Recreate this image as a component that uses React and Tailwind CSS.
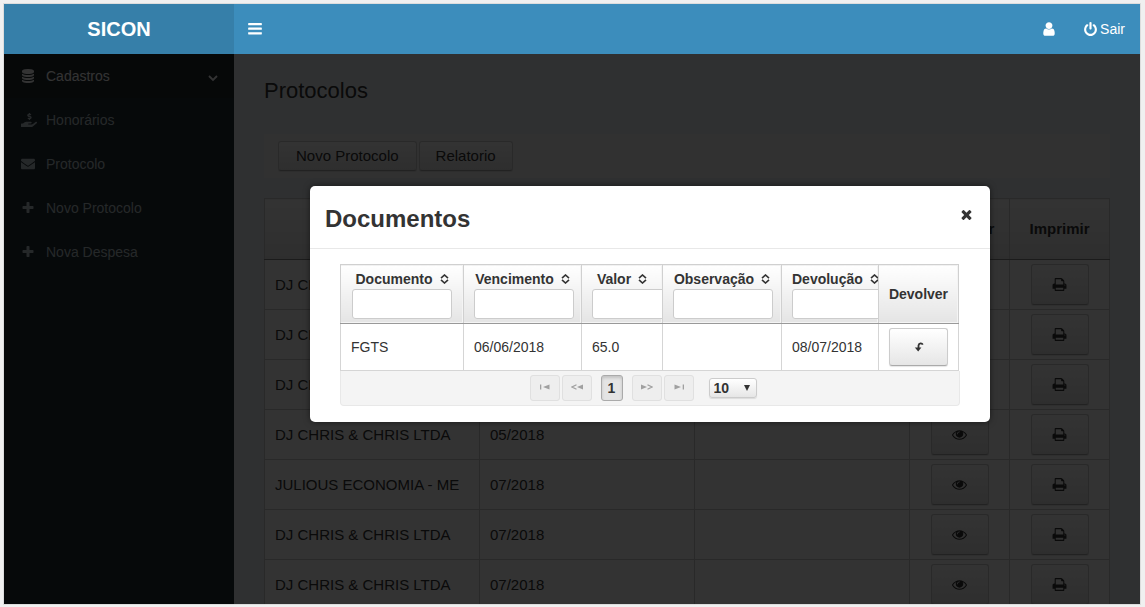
import React from "react";
import { FaHandHoldingUsd, FaEnvelope } from "react-icons/fa";

const PATHS = {
  bars: "M1664 1312v128q0 26-19 45t-45 19h-1408q-26 0-45-19t-19-45v-128q0-26 19-45t45-19h1408q26 0 45 19t19 45zm0-512v128q0 26-19 45t-45 19h-1408q-26 0-45-19t-19-45v-128q0-26 19-45t45-19h1408q26 0 45 19t19 45zm0-512v128q0 26-19 45t-45 19h-1408q-26 0-45-19t-19-45v-128q0-26 19-45t45-19h1408q26 0 45 19t19 45z",
  user: "M1536 1399q0 109-62.5 187t-150.5 78h-854q-88 0-150.5-78t-62.5-187q0-85 8.5-160.5t31.5-152 58.5-131 94-89 134.5-34.5q131 128 313 128t313-128q76 0 134.5 34.5t94 89 58.5 131 31.5 152 8.5 160.5zm-256-887q0 159-112.5 271.5t-271.5 112.5-271.5-112.5-112.5-271.5 112.5-271.5 271.5-112.5 271.5 112.5 112.5 271.5z",
  power: "M1664 896q0 156-61 298t-164 245-245 164-298 61-298-61-245-164-164-245-61-298q0-182 80.5-343t226.5-270q43-32 95.5-25t83.5 50q32 42 24.5 94.5t-49.5 84.5q-98 74-151.5 181t-53.5 228q0 104 40.5 198.5t109.5 163.5 163.5 109.5 198.5 40.5 198.5-40.5 163.5-109.5 109.5-163.5 40.5-198.5q0-121-53.5-228t-151.5-181q-42-32-49.5-84.5t24.5-94.5q31-43 84-50t95 25q146 109 226.5 270t80.5 343zm-640-768v640q0 52-38 90t-90 38-90-38-38-90v-640q0-52 38-90t90-38 90 38 38 90z",
  database: "M896 768q237 0 443-43t325-127v170q0 69-103 128t-280 93.5-385 34.5-385-34.5-280-93.5-103-128v-170q119 84 325 127t443 43zm0 768q237 0 443-43t325-127v170q0 69-103 128t-280 93.5-385 34.5-385-34.5-280-93.5-103-128v-170q119 84 325 127t443 43zm0-384q237 0 443-43t325-127v170q0 69-103 128t-280 93.5-385 34.5-385-34.5-280-93.5-103-128v-170q119 84 325 127t443 43zm0-1152q208 0 385 34.5t280 93.5 103 128v128q0 69-103 128t-280 93.5-385 34.5-385-34.5-280-93.5-103-128v-128q0-69 103-128t280-93.5 385-34.5z",
  plus: "M1600 736v192q0 40-28 68t-68 28h-416v416q0 40-28 68t-68 28h-192q-40 0-68-28t-28-68v-416h-416q-40 0-68-28t-28-68v-192q0-40 28-68t68-28h416v-416q0-40 28-68t68-28h192q40 0 68 28t28 68v416h416q40 0 68 28t28 68z",
  print: "M448 1536h896v-256h-896v256zm0-640h896v-384h-160q-40 0-68-28t-28-68v-160h-640v640zm1152 64q0-26-19-45t-45-19-45 19-19 45 19 45 45 19 45-19 19-45zm128 0v416q0 13-9.5 22.5t-22.5 9.5h-224v160q0 40-28 68t-68 28h-960q-40 0-68-28t-28-68v-160h-224q-13 0-22.5-9.5t-9.5-22.5v-416q0-79 56.5-135.5t135.5-56.5h64v-544q0-40 28-68t68-28h672q40 0 88 20t76 48l152 152q28 28 48 76t20 88v256h64q79 0 135.5 56.5t56.5 135.5z",
  eye: "M1664 960q-152-236-381-353 61 104 61 225 0 185-131.5 316.5t-316.5 131.5-316.5-131.5-131.5-316.5q0-121 61-225-229 117-381 353 133 205 333.5 326.5t434.5 121.5 434.5-121.5 333.5-326.5zm-720-384q0-20-14-34t-34-14q-125 0-214.5 89.5t-89.5 214.5q0 20 14 34t34 14 34-14 14-34q0-86 61-147t147-61q20 0 34-14t14-34zm848 384q0 34-20 69-140 230-376.5 368.5t-499.5 138.5-499.5-139-376.5-368q-20-35-20-69t20-69q140-229 376.5-368t499.5-139 499.5 139 376.5 368q20 35 20 69z",
  times: "M1490 1322q0 40-28 68l-136 136q-28 28-68 28t-68-28l-294-294-294 294q-28 28-68 28t-68-28l-136-136q-28-28-28-68t28-68l294-294-294-294q-28-28-28-68t28-68l136-136q28-28 68-28t68 28l294 294 294-294q28-28 68-28t68 28l136 136q28 28 28 68t-28 68l-294 294 294 294q28 28 28 68z",
};

function Icon({ name, className = "size-3.5" }) {
  return (
    <svg viewBox="0 0 1792 1792" fill="currentColor" className={`shrink-0 ${className}`} aria-hidden="true">
      <path d={PATHS[name]} />
    </svg>
  );
}

const MENU = [
  { label: "Honorários", icon: <FaHandHoldingUsd className="size-4" /> },
  { label: "Protocolo", icon: <FaEnvelope className="size-3.5" /> },
  { label: "Novo Protocolo", icon: <Icon name="plus" /> },
  { label: "Nova Despesa", icon: <Icon name="plus" /> },
];

const ROWS = [
  ["DJ CHRIS & CHRIS LTDA", ""],
  ["DJ CHRIS & CHRIS LTDA", ""],
  ["DJ CHRIS & CHRIS LTDA", ""],
  ["DJ CHRIS & CHRIS LTDA", "05/2018"],
  ["JULIOUS ECONOMIA - ME", "07/2018"],
  ["DJ CHRIS & CHRIS LTDA", "07/2018"],
  ["DJ CHRIS & CHRIS LTDA", "07/2018"],
];

const BUTTON =
  "flex items-center justify-center rounded-[3px] border border-[#ccc] border-b-[#aaa] bg-linear-to-b from-white to-[#e6e6e6] text-[#333] shadow-[0_1px_1px_rgba(0,0,0,0.1)]";

function Sidebar() {
  return (
    <nav className="w-[230px] shrink-0 bg-[#222d32] text-sm text-[#b8c7ce]">
      <a href="#cadastros" className="flex h-11 items-center bg-[#1e282c] pr-4 pl-[17px] text-white">
        <span className="flex w-[25px]"><Icon name="database" /></span>
        Cadastros
        <svg viewBox="0 0 10 10" className="mt-1 ml-auto size-2.5" fill="none" stroke="currentColor" strokeWidth="1.8" aria-hidden="true">
          <path d="M1 3l4 4 4-4" />
        </svg>
      </a>
      {MENU.map((m) => (
        <a key={m.label} href="#menu" className="flex h-11 items-center px-[17px]">
          <span className="flex w-[25px]">{m.icon}</span>
          {m.label}
        </a>
      ))}
    </nav>
  );
}

function Protocols() {
  const th = "border border-[#ccc] border-b-[#888] bg-linear-to-b from-white to-[#e6e6e6] px-2.5 font-bold";
  const td = "border border-[#ccc] px-2.5";
  return (
    <main className="min-w-0 flex-1 overflow-hidden bg-[#ecf0f5] px-[30px] pt-[21px] text-[15px] text-[#333]">
      <h1 className="text-[22px] leading-8">Protocolos</h1>
      <div className="mt-[27px] flex gap-0.5 bg-[#f4f4f5] px-3.5 py-[7px]">
        <button type="button" className={`${BUTTON} h-[30px] px-[17px]`}>Novo Protocolo</button>
        <button type="button" className={`${BUTTON} h-[30px] px-4`}>Relatorio</button>
      </div>
      <table className="mt-5 w-full table-fixed border-collapse bg-white">
        <colgroup>
          <col /><col /><col />
          <col className="w-[100px]" /><col className="w-[100px]" />
        </colgroup>
        <thead>
          <tr className="h-[61px]">
            <th className={th} />
            <th className={th} />
            <th className={th} />
            <th className={th}>Visualizar</th>
            <th className={th}>Imprimir</th>
          </tr>
        </thead>
        <tbody>
          {ROWS.map(([name, month], i) => (
            <tr key={i} className="h-[50px]">
              <td className={`${td} pt-0.5 whitespace-nowrap`}>{name}</td>
              <td className={`${td} pt-0.5`}>{month}</td>
              <td className={td} />
              <td className={td}>
                <button type="button" aria-label="Visualizar" className={`${BUTTON} mx-auto h-[41px] w-[58px]`}>
                  <Icon name="eye" className="size-[15px]" />
                </button>
              </td>
              <td className={td}>
                <button type="button" aria-label="Imprimir" className={`${BUTTON} mx-auto h-[41px] w-[58px]`}>
                  <Icon name="print" className="size-[15px]" />
                </button>
              </td>
            </tr>
          ))}
        </tbody>
      </table>
    </main>
  );
}

function SortIcon() {
  return (
    <svg viewBox="0 0 9 10" className="h-2.5 w-[9px] shrink-0" fill="none" stroke="currentColor" strokeWidth="1.6" aria-hidden="true">
      <path d="M1 4.200L4.500 1L8 4.200M1 5.800L4.500 9L8 5.800" />
    </svg>
  );
}

const COLUMNS = ["Documento", "Vencimento", "Valor", "Observação", "Devolução"];

function PageButton({ label, d, outline, className = "" }) {
  return (
    <button type="button" disabled aria-label={label} className={`flex h-[26px] w-[30px] items-center justify-center rounded-[3px] border border-[#e0e0e0] bg-[#eee] pb-0.5 text-[#a0a0a0] ${className}`}>
      <svg viewBox="0 0 12 6" className="h-1.5 w-3" aria-hidden="true">
        <path d={d} fill="currentColor" />
        {outline && <path d={outline} fill="none" stroke="currentColor" strokeWidth="1.2" />}
      </svg>
    </button>
  );
}

function Dialog() {
  const head = "border border-[#d0d0d0] border-b-[#999] bg-linear-to-b from-white to-[#e4e4e4] p-0 font-bold shadow-[inset_-1px_-1px_0_#f4f4f4]";
  const cell = "border border-[#d5d5d5] px-2.5";
  return (
    <section role="dialog" aria-labelledby="dialog-title" className="absolute top-[132px] left-[306px] w-[680px] rounded-[5px] bg-white pb-4 text-sm text-[#333] shadow-[0_0_6px_rgba(0,0,0,0.5)]">
      <header className="flex h-[63px] items-center justify-between border-b border-[#e8e8e8] px-[15px] pt-1">
        <h2 id="dialog-title" className="text-2xl font-bold">Documentos</h2>
        <button type="button" aria-label="Fechar" className="mb-2.5 flex size-[17px] items-center justify-center">
          <Icon name="times" className="size-[15px]" />
        </button>
      </header>
      <div className="px-[30px] pt-[15px]">
        <table className="w-[619px] table-fixed border-collapse">
          <colgroup>
            <col className="w-[123px]" /><col className="w-[118px]" /><col className="w-[81px]" />
            <col className="w-[119px]" /><col className="w-[97px]" /><col className="w-[80px]" />
          </colgroup>
          <thead>
            <tr className="h-[59px]">
              {COLUMNS.map((c) => (
                <th key={c} className={head}>
                  <div className="overflow-hidden px-2.5">
                    <div className="mx-auto flex h-5 w-max items-center gap-[7px]">
                      <span>{c}</span>
                      <SortIcon />
                    </div>
                    <input aria-label={`Filtrar ${c}`} className="mx-auto block h-[30px] w-[100px] rounded-[3px] border border-[#ccc] bg-white px-2 font-normal" />
                  </div>
                </th>
              ))}
              <th className={head}>Devolver</th>
            </tr>
          </thead>
          <tbody>
            <tr className="h-[47px]">
              <td className={cell}>FGTS</td>
              <td className={cell}>06/06/2018</td>
              <td className={cell}>65.0</td>
              <td className={cell} />
              <td className={cell}>08/07/2018</td>
              <td className={cell}>
                <button type="button" aria-label="Devolver" className={`${BUTTON} h-[38px] w-full`}>
                  <svg viewBox="0 0 10 10" className="size-2.5" fill="none" stroke="currentColor" strokeWidth="1.8" aria-hidden="true">
                    <path d="M8.800 2.600C8 1 5 .8 4.500 3.500V7" />
                    <path d="M.8 5.500h6.600L4.200 9.400z" fill="currentColor" stroke="none" />
                  </svg>
                </button>
              </td>
            </tr>
          </tbody>
        </table>
        <div className="flex h-[35px] items-center justify-center rounded-b border border-t-0 border-[#e8e8e8] bg-[#f4f4f4] pr-3.5">
          <PageButton label="Primeira página" d="M1 .5h1.300v5H1zM10.500 .5v5L4 3z" />
          <PageButton label="Página anterior" d="M12 .5v5L6 3z" outline="M5.500 .8L1 3l4.500 2.200" className="ml-0.5" />
          <button type="button" className="mx-[9px] h-[26px] w-[22px] rounded-[3px] border border-[#aaa] bg-[#e4e4e4] font-bold shadow-[inset_0_2px_3px_rgba(0,0,0,0.15)]">1</button>
          <PageButton label="Próxima página" d="M0 .5v5L6 3z" outline="M6.500 .8L11 3 6.500 5.200" />
          <PageButton label="Última página" d="M1.500 .5v5L8 3zM9.700 .5H11v5H9.700z" className="ml-0.5" />
          <div className="relative ml-[15px] h-5 w-12">
            <select aria-label="Linhas por página" defaultValue="10" className="block h-5 w-12 appearance-none rounded-[3px] border border-[#ccc] bg-linear-to-b from-white to-[#e6e6e6] pl-1 text-sm leading-[18px] font-bold shadow-[0_1px_1px_rgba(0,0,0,0.1)]">
              <option>10</option>
              <option>20</option>
            </select>
            <svg viewBox="0 0 6 6" className="pointer-events-none absolute top-[7px] right-[7px] size-1.5" fill="currentColor" aria-hidden="true">
              <path d="M0 0h6L3 6z" />
            </svg>
          </div>
        </div>
      </div>
    </section>
  );
}

export default function App() {
  return (
    <div className="h-screen bg-[#f0f0f0] pt-1 pr-[5px] pb-[3px] pl-1 font-['Liberation_Sans',Arial,sans-serif]">
      <div className="flex h-full flex-col overflow-hidden shadow-[0_0_0_1px_#ddd]">
        <header className="flex h-[50px] shrink-0 text-sm text-white">
          <a href="#inicio" className="flex w-[230px] items-center justify-center bg-[#367fa9] text-xl font-bold">SICON</a>
          <div className="flex flex-1 items-center bg-[#3c8dbc] px-[15px]">
            <button type="button" aria-label="Menu" className="-ml-0.5"><Icon name="bars" className="size-4" /></button>
            <a href="#perfil" aria-label="Perfil" className="ml-auto"><Icon name="user" className="size-4" /></a>
            <a href="#sair" className="ml-[26px] flex items-center gap-0.5"><Icon name="power" className="size-[15px]" />Sair</a>
          </div>
        </header>
        <div className="relative flex min-h-0 flex-1">
          <Sidebar />
          <Protocols />
          <div className="absolute inset-0 bg-black/80" />
          <Dialog />
        </div>
      </div>
    </div>
  );
}
